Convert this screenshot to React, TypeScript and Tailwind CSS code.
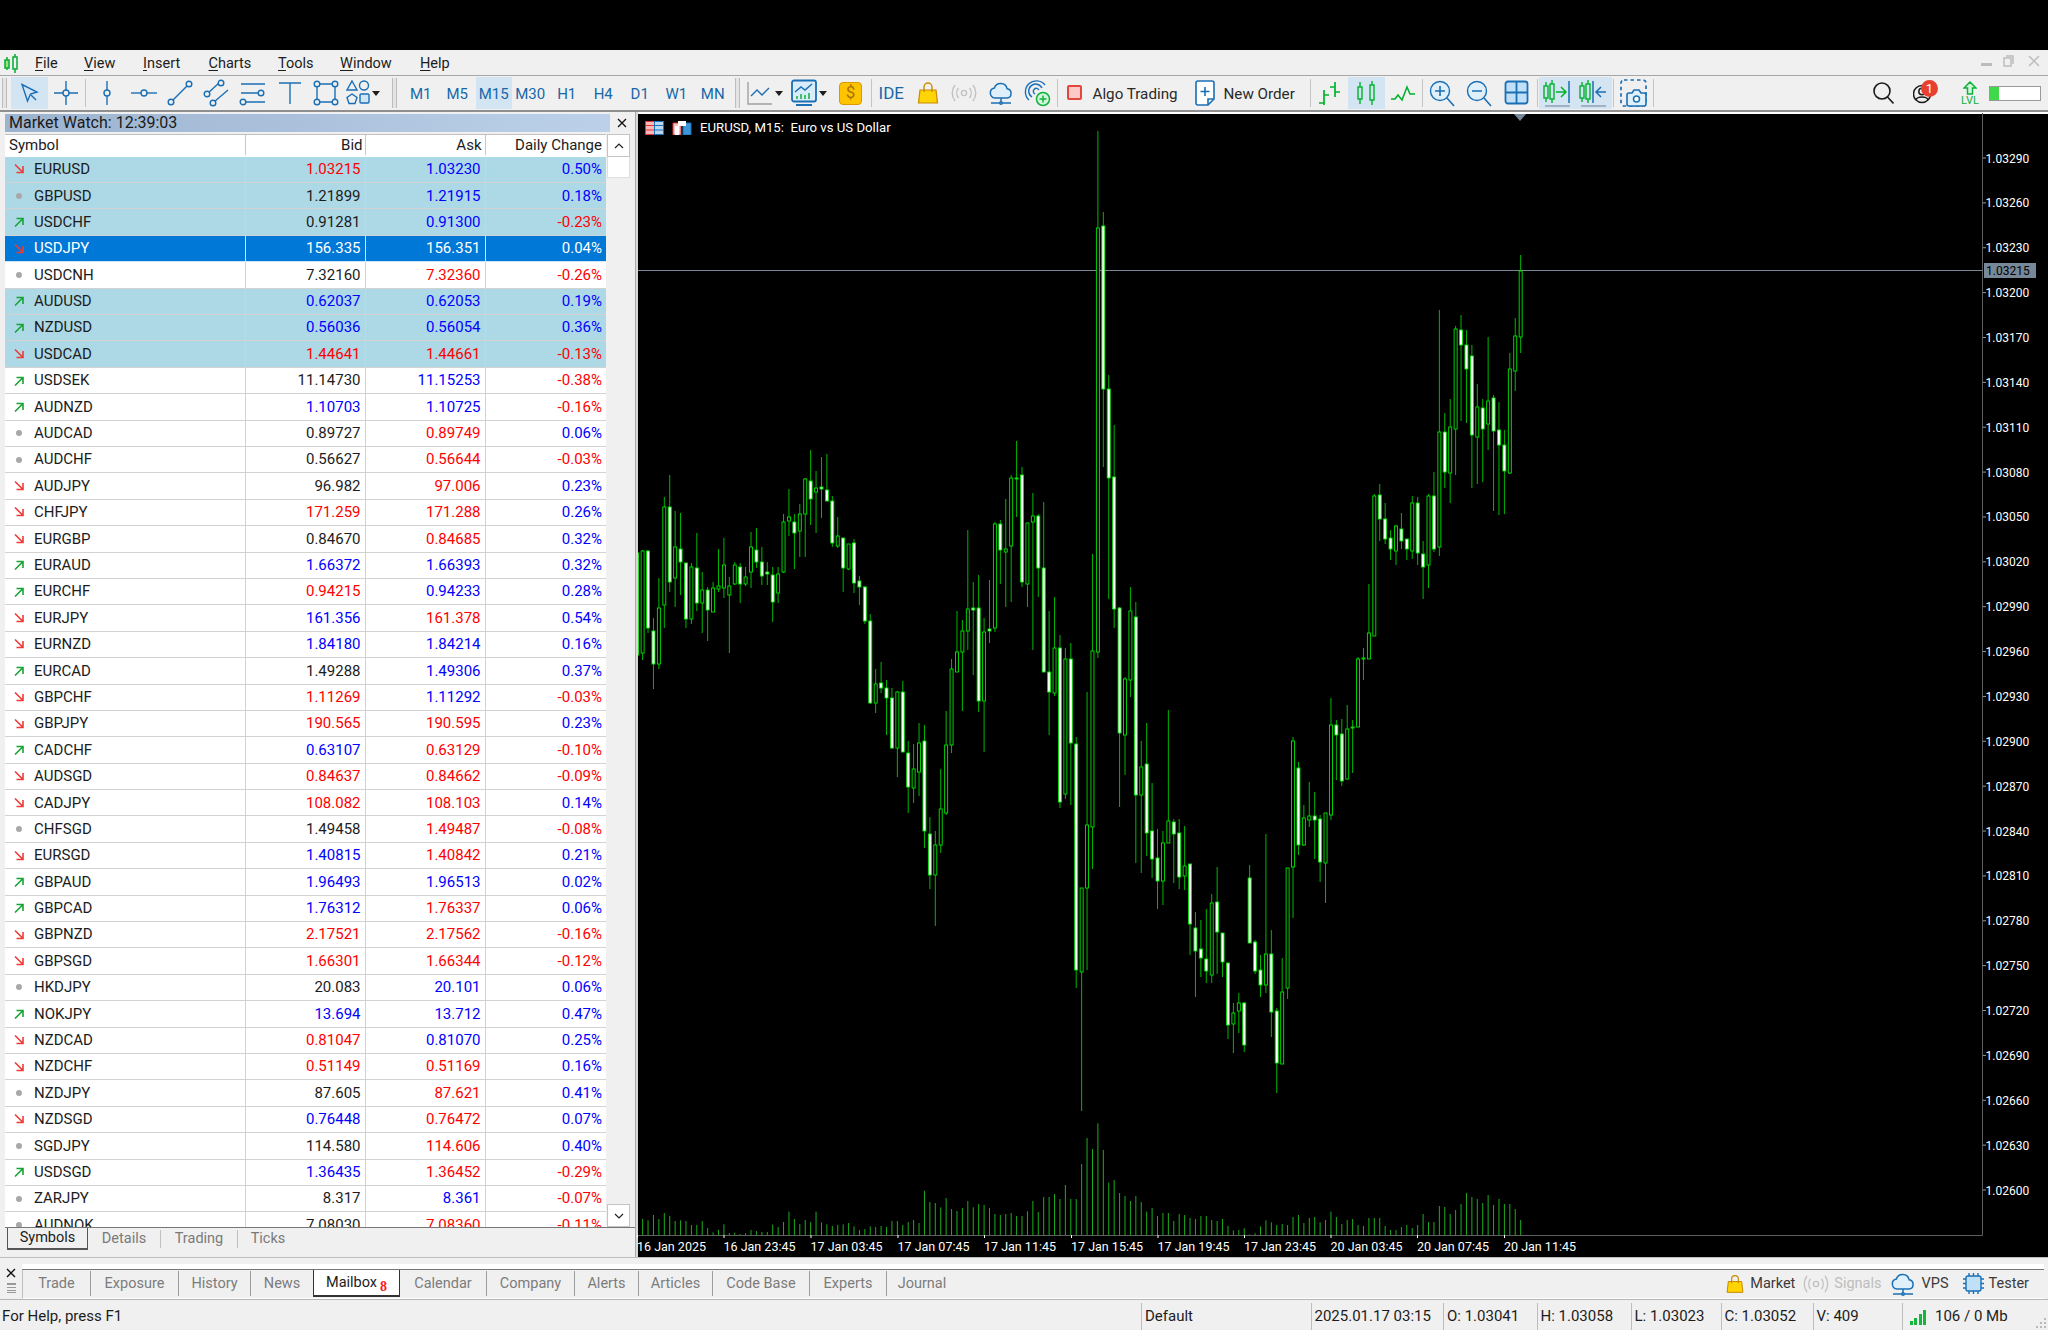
import type { ReactNode } from 'react';

const BLUE = '#1a6fb5';
const GREEN = '#00b32c';

// kind, high, body top, body bottom, low (page y). kind 1 = white body, 0 = hollow
const CANDLES: number[][] = [
  [1,553,553,655,655],[0,550,551,653,660],[1,550,551,628,633],[1,618,631,664,689],[0,578,608,664,669],
  [0,497,507,605,628],[1,475,507,582,592],[0,511,547,578,607],[1,513,549,562,595],[1,563,563,619,628],
  [0,563,567,619,624],[1,533,568,603,611],[0,572,590,603,633],[1,587,590,610,641],[0,582,588,612,612],
  [0,549,586,589,592],[0,538,565,588,598],[0,577,586,595,653],[0,562,565,584,585],[1,563,567,584,603],
  [0,567,577,584,586],[0,532,547,572,588],[1,528,550,562,568],[1,547,562,576,585],[1,562,572,574,585],
  [1,567,575,602,622],[0,567,574,593,603],[0,514,522,572,573],[0,489,517,521,536],[1,514,522,533,569],
  [0,504,514,531,557],[0,478,479,514,557],[1,450,481,499,525],[0,471,488,492,533],[1,457,487,489,518],
  [1,454,490,501,501],[1,496,501,543,547],[0,517,536,546,548],[1,538,538,568,592],[0,544,544,569,570],
  [1,539,543,583,593],[1,576,581,587,605],[1,586,587,621,624],[1,614,621,703,704],[0,669,684,703,713],
  [1,662,683,688,693],[1,680,688,698,735],[1,688,698,748,749],[0,691,692,748,777],[1,681,692,752,752],
  [1,741,753,787,813],[0,744,769,788,803],[0,723,743,772,796],[1,725,741,831,848],[1,817,834,875,889],
  [0,831,845,875,926],[0,769,809,845,853],[0,711,745,813,815],[0,659,669,745,753],[0,611,652,672,672],
  [0,620,631,652,711],[0,530,609,631,650],[1,582,608,610,675],[1,575,608,701,712],[0,618,632,701,752],
  [1,580,629,631,643],[0,522,524,628,632],[1,520,524,550,584],[0,499,549,552,607],[0,475,478,546,602],
  [1,441,478,479,517],[1,467,475,582,587],[0,523,523,584,607],[0,493,516,522,650],[1,514,516,568,597],
  [1,502,568,672,672],[1,611,672,692,735],[0,597,648,693,696],[1,635,648,802,808],[0,648,659,794,799],
  [1,643,659,743,805],[1,737,744,970,988],[0,888,888,972,1111],[0,692,825,888,970],[0,554,651,827,869],
  [0,131,228,652,658],[1,212,226,389,467],[1,375,389,478,599],[1,425,477,609,628],[1,607,608,733,807],
  [0,677,679,735,775],[0,587,611,680,697],[1,602,617,795,863],[0,741,767,795,873],[1,723,764,833,856],
  [1,783,831,859,878],[1,829,858,881,909],[0,831,843,881,905],[0,710,821,843,843],[1,819,822,834,883],
  [1,819,833,877,889],[0,826,866,876,890],[1,864,864,924,955],[1,912,928,951,997],[1,920,949,958,977],
  [1,909,959,971,983],[0,894,903,975,983],[1,867,902,932,974],[1,933,933,962,977],[1,963,963,1025,1039],
  [0,1003,1013,1024,1053],[0,993,1003,1011,1033],[1,1002,1003,1045,1052],[1,865,878,943,943],[1,940,942,971,974],
  [1,955,970,985,997],[0,834,954,985,993],[1,930,954,1012,1037],[1,1008,1011,1063,1093],[0,958,992,1064,1064],
  [0,868,868,988,999],[0,737,741,867,918],[1,762,768,845,855],[0,805,818,845,846],[0,782,816,820,827],
  [1,792,816,820,859],[1,815,819,862,882],[0,813,813,863,903],[0,698,725,815,820],[1,720,725,735,780],
  [1,719,734,781,786],[0,705,729,779,780],[0,720,727,727,773],[0,657,659,727,727],[0,648,658,659,680],
  [0,584,633,659,659],[0,494,496,636,636],[1,484,495,519,541],[1,503,519,539,544],[1,530,538,549,560],
  [0,525,526,551,565],[1,513,529,541,549],[1,539,539,549,560],[0,496,503,551,559],[1,497,503,553,565],
  [1,541,554,567,599],[0,494,496,565,588],[1,472,496,549,552],[0,310,432,547,556],[1,413,432,472,488],
  [0,399,427,473,503],[0,326,329,429,475],[1,315,330,345,421],[1,330,345,369,423],[1,345,356,435,488],
  [0,384,407,437,484],[1,399,408,429,482],[0,337,401,424,450],[1,395,398,431,511],[1,402,430,445,515],
  [1,430,445,471,514],[0,353,369,473,474],[0,318,336,371,391],[0,255,271,337,353],
];

// tops of the volume bars, read off a 3x crop; baseline is 374 in the same scale
const VOLUMES = [
  327,331,315,327,309,318,333,331,333,345,345,333,354,367,360,343,369,368,372,369,
  360,363,366,366,344,351,336,305,327,342,330,336,305,337,343,348,345,343,339,349,
  360,357,349,351,348,351,333,333,345,336,330,339,242,276,279,292,264,297,303,294,
  273,292,282,285,294,312,315,312,309,318,318,304,273,306,261,261,252,267,225,267,
  267,162,84,117,40,120,218,210,249,258,273,258,276,305,294,318,309,309,333,312,
  315,324,327,318,318,330,333,327,348,361,360,355,373,370,349,331,337,345,342,345,
  321,315,339,324,321,337,330,305,321,342,330,327,345,348,324,324,324,348,360,360,
  351,345,354,345,312,336,336,288,291,312,300,282,249,261,267,279,255,285,267,282,
  282,297,330,
];

const PRICES = ['1.03290','1.03260','1.03230','1.03200','1.03170','1.03140','1.03110','1.03080','1.03050','1.03020','1.02990','1.02960','1.02930','1.02900','1.02870','1.02840','1.02810','1.02780','1.02750','1.02720','1.02690','1.02660','1.02630','1.02600'];
const TIMES: [number, string][] = [
  [637, '16 Jan 2025'],[723.5, '16 Jan 23:45'],[810.5, '17 Jan 03:45'],[897.5, '17 Jan 07:45'],[984, '17 Jan 11:45'],[1071, '17 Jan 15:45'],
  [1157.5, '17 Jan 19:45'],[1244, '17 Jan 23:45'],[1330.5, '20 Jan 03:45'],[1417, '20 Jan 07:45'],[1504, '20 Jan 11:45'],
];

// dir: d = red arrow, u = green arrow, n = grey dot. colours: k black, r red, b blue
const ROWS: [string, string, string, string, string, string, string, string][] = [
  ['EURUSD','d','1.03215','r','1.03230','b','0.50%','b'],['GBPUSD','n','1.21899','k','1.21915','b','0.18%','b'],
  ['USDCHF','u','0.91281','k','0.91300','b','-0.23%','r'],['USDJPY','d','156.335','w','156.351','w','0.04%','w'],
  ['USDCNH','n','7.32160','k','7.32360','r','-0.26%','r'],['AUDUSD','u','0.62037','b','0.62053','b','0.19%','b'],
  ['NZDUSD','u','0.56036','b','0.56054','b','0.36%','b'],['USDCAD','d','1.44641','r','1.44661','r','-0.13%','r'],
  ['USDSEK','u','11.14730','k','11.15253','b','-0.38%','r'],['AUDNZD','u','1.10703','b','1.10725','b','-0.16%','r'],
  ['AUDCAD','n','0.89727','k','0.89749','r','0.06%','b'],['AUDCHF','n','0.56627','k','0.56644','r','-0.03%','r'],
  ['AUDJPY','d','96.982','k','97.006','r','0.23%','b'],['CHFJPY','d','171.259','r','171.288','r','0.26%','b'],
  ['EURGBP','d','0.84670','k','0.84685','r','0.32%','b'],['EURAUD','u','1.66372','b','1.66393','b','0.32%','b'],
  ['EURCHF','u','0.94215','r','0.94233','b','0.28%','b'],['EURJPY','d','161.356','b','161.378','r','0.54%','b'],
  ['EURNZD','d','1.84180','b','1.84214','b','0.16%','b'],['EURCAD','u','1.49288','k','1.49306','b','0.37%','b'],
  ['GBPCHF','d','1.11269','r','1.11292','b','-0.03%','r'],['GBPJPY','d','190.565','r','190.595','r','0.23%','b'],
  ['CADCHF','u','0.63107','b','0.63129','r','-0.10%','r'],['AUDSGD','d','0.84637','r','0.84662','r','-0.09%','r'],
  ['CADJPY','d','108.082','r','108.103','r','0.14%','b'],['CHFSGD','n','1.49458','k','1.49487','r','-0.08%','r'],
  ['EURSGD','d','1.40815','b','1.40842','r','0.21%','b'],['GBPAUD','u','1.96493','b','1.96513','b','0.02%','b'],
  ['GBPCAD','u','1.76312','b','1.76337','r','0.06%','b'],['GBPNZD','d','2.17521','r','2.17562','r','-0.16%','r'],
  ['GBPSGD','d','1.66301','r','1.66344','r','-0.12%','r'],['HKDJPY','n','20.083','k','20.101','b','0.06%','b'],
  ['NOKJPY','u','13.694','b','13.712','b','0.47%','b'],['NZDCAD','d','0.81047','r','0.81070','b','0.25%','b'],
  ['NZDCHF','d','0.51149','r','0.51169','r','0.16%','b'],['NZDJPY','n','87.605','k','87.621','r','0.41%','b'],
  ['NZDSGD','d','0.76448','b','0.76472','r','0.07%','b'],['SGDJPY','n','114.580','k','114.606','r','0.40%','b'],
  ['USDSGD','u','1.36435','b','1.36452','r','-0.29%','r'],['ZARJPY','n','8.317','k','8.361','b','-0.07%','r'],
  ['AUDNOK','n','7.08030','k','7.08360','r','-0.11%','r'],
];

const TEXT_COLORS: Record<string, string> = {
  k: 'text-[#1c1c1c]',
  r: 'text-[#ff0000]',
  b: 'text-[#0000ff]',
  w: 'text-white',
};

const TICKED = [0, 1, 2, 5, 6, 7];

function Ico({ children, w = 28, h = 28, stroke = BLUE }: { children: ReactNode; w?: number; h?: number; stroke?: string }) {
  return (
    <svg width={w} height={h} viewBox={`0 0 ${w} ${h}`} fill="none" stroke={stroke} strokeWidth="1.4">
      {children}
    </svg>
  );
}

function Tool({ active, children }: { active?: boolean; children: ReactNode }) {
  return (
    <div className={`w-[36.5px] h-[32px] shrink-0 flex items-center justify-center ${active ? 'bg-[#d3e4f3]' : ''}`}>
      {children}
    </div>
  );
}

function Period({ label, active }: { label: string; active?: boolean }) {
  return (
    <div className={`w-[36.5px] h-[32px] shrink-0 flex items-center justify-center pt-[2px] text-[15px] text-[#1668a8] ${active ? 'bg-[#d3e4f3]' : ''}`}>
      {label}
    </div>
  );
}

function Sep() {
  return <div className="w-px h-[28px] shrink-0 mx-[1px] bg-[#c4c4c4]" />;
}

function Grip() {
  return <div className="w-[5px] h-[30px] shrink-0 border-x border-[#bdbdbd] bg-[#e4e4e4]" />;
}

function Caret() {
  return <div className="w-0 h-0 border-x-[4px] border-x-transparent border-t-[5px] border-t-[#1e1e1e]" />;
}

function CandleGlyph({ x, top, bottom, hi, lo }: { x: number; top: number; bottom: number; hi: number; lo: number }) {
  return (
    <g>
      <path d={`M${x} ${hi}V${top}M${x} ${bottom}V${lo}`} />
      <rect x={x - 2} y={top} width="4" height={bottom - top} />
    </g>
  );
}

function BagIcon({ size = 24 }: { size?: number }) {
  return (
    <svg width={size} height={size} viewBox="0 0 24 24">
      <path d="M4 9h16l1.5 13h-19z" fill="#ffd400" stroke="#c98a00" strokeWidth="1.2" />
      <path d="M8 11V6a4 4 0 0 1 8 0v5" fill="none" stroke="#c98a00" strokeWidth="1.4" />
    </svg>
  );
}

function SignalIcon() {
  return (
    <svg width="26" height="22" viewBox="0 0 26 22" fill="none" stroke="#c2c2c2" strokeWidth="1.4">
      <circle cx="13" cy="11" r="2.6" />
      <path d="M7.5 6a8 8 0 0 0 0 10M18.5 6a8 8 0 0 1 0 10M4 3a13 13 0 0 0 0 16M22 3a13 13 0 0 1 0 16" />
    </svg>
  );
}

function CloudIcon() {
  return (
    <svg width="26" height="26" viewBox="0 0 26 26" fill="#dff0fb" stroke={BLUE} strokeWidth="1.5">
      <path d="M7 18a5 5 0 0 1-.6-9.9 6.6 6.6 0 0 1 12.7.6A4.7 4.7 0 0 1 19 18z" />
      <path d="M13 18v5M3 23h20" fill="none" />
      <circle cx="13" cy="23" r="1.2" />
    </svg>
  );
}

function Candles() {
  const xAt = (i: number) => 637.2 + 5.42 * i;
  return (
    <svg className="block absolute inset-0" width="1412" height="1145" viewBox="636 112 1412 1145">
      <rect x="636" y="112" width="1412" height="2" fill="#fff" />
      <path d="M1982.5 113V1235.5H638" stroke="#5f5f5f" fill="none" />
      <path d="M1514 114h12l-6 7z" fill="#78889a" />

      {VOLUMES.map((t, i) => (
        <path key={i} d={`M${xAt(i + 1)} ${1110 + t / 3}V1235`} stroke="#20c020" strokeWidth="0.9" />
      ))}

      <line x1="638" x2="1982" y1="270.5" y2="270.5" stroke="#778899" />

      {CANDLES.map(([kind, hi, top, bottom, lo], i) => {
        const x = xAt(i);
        return (
          <g key={i}>
            <line x1={x} x2={x} y1={hi} y2={lo} stroke="#00cc00" strokeWidth="0.9" />
            <rect x={x - 1.5} y={top} width="3" height={Math.max(bottom - top, 1)} fill={kind ? '#fff' : '#000'} stroke="#00e600" strokeWidth="0.9" />
          </g>
        );
      })}

      <rect x="636" y="112" width="2" height="1145" fill="#d8d8d8" />

      {PRICES.map((p, i) => {
        const y = 158 + i * 44.87;
        return (
          <g key={p}>
            <path d={`M1983 ${y}h3`} stroke="#9a9a9a" />
            <text x="1985.5" y={y + 4.5} fill="#fff" fontSize="12">{p}</text>
          </g>
        );
      })}
      <rect x="1984" y="263" width="52" height="15" fill="#778899" />
      <text x="1986" y="275" fill="#000" fontSize="12">1.03215</text>

      {TIMES.map(([x, t]) => (
        <g key={t}>
          <path d={`M${x + 0.5} 1235v3`} stroke="#fff" />
          <text x={x} y="1250.5" fill="#fff" fontSize="12.5">{t}</text>
        </g>
      ))}
    </svg>
  );
}

function ChartHeader() {
  return (
    <div className="absolute left-[9px] top-[8px] flex items-center gap-[8px] text-white text-[13.2px] leading-4">
      <svg width="19" height="14" viewBox="0 0 19 14">
        <rect width="19" height="14" rx="1" fill="#fff" />
        <rect x="0.5" y="0.5" width="9" height="13" fill="#f9b9b9" stroke="#d33" />
        <rect x="9.5" y="0.5" width="9" height="13" fill="#b9d7f2" stroke="#1a6fb5" />
        <path d="M1 4.5h8M1 9h8" stroke="#d33" />
        <path d="M10 4.5h8M10 9h8" stroke="#1a6fb5" />
      </svg>
      <svg width="20" height="14" viewBox="0 0 20 14">
        <path d="M1 2h8v12H1z" fill="#f8c0c0" stroke="#d33" />
        <path d="M11 2h8v12h-8z" fill="#3d95da" stroke="#1a6fb5" />
        <rect x="6" y="0" width="8" height="5" fill="#fff" />
        <rect x="3" y="5" width="4" height="9" fill="#fff" />
      </svg>
      <span className="whitespace-pre">EURUSD, M15:  Euro vs US Dollar</span>
    </div>
  );
}

function DirIcon({ dir }: { dir: string }) {
  if (dir === 'n') return <div className="w-[6px] h-[6px] rounded-full bg-[#a8a8a8] ml-[3px] mr-[3px]" />;
  const up = dir === 'u';
  return (
    <svg width="12" height="12" viewBox="0 0 12 12" fill="none" stroke={up ? '#16a534' : '#ee3b36'} strokeWidth="1.6">
      {up ? <path d="M2 10.5 10 2.5M3.5 2.5H10V9" /> : <path d="M2 1.5 10 9.5M3.5 9.5H10V3" />}
    </svg>
  );
}

function MarketRow({ row, index }: { row: (typeof ROWS)[number]; index: number }) {
  const [symbol, dir, bid, bidC, ask, askC, chg, chgC] = row;
  const selected = index === 3;
  const bg = selected ? 'bg-[#0078d7]' : TICKED.includes(index) ? 'bg-[#add8e6]' : 'bg-white';
  const line = selected ? 'border-[#cfe4f5]' : 'border-[#d2d2d2]';
  return (
    <div className={`flex h-[26.4px] shrink-0 border-b ${line} ${bg}`}>
      <div className={`w-[240.5px] shrink-0 flex items-center border-r ${line}`}>
        <div className="w-[29px] pl-[8px] shrink-0 flex items-center"><DirIcon dir={dir} /></div>
        <span className={selected ? 'text-white' : 'text-[#1c1c1c]'}>{symbol}</span>
      </div>
      <div className={`w-[120px] shrink-0 flex items-center justify-end pr-[4px] border-r ${line} ${TEXT_COLORS[bidC]}`}>{bid}</div>
      <div className={`w-[120px] shrink-0 flex items-center justify-end pr-[4px] border-r ${line} ${TEXT_COLORS[askC]}`}>{ask}</div>
      <div className={`flex-1 flex items-center justify-end pr-[4px] ${TEXT_COLORS[chgC]}`}>{chg}</div>
    </div>
  );
}

function MarketWatch() {
  return (
    <div className="w-[636px] shrink-0 h-full flex flex-col bg-[#f0f0f0] border-r border-[#a9a9a9] pl-[5px] text-[15px]">
      <div className="flex items-center mt-[2px] h-[18px] shrink-0">
        <div className="w-[605px] h-full bg-gradient-to-r from-[#9cb3cf] to-[#bcd1e9] flex items-center text-[16px] text-[#1a1a1a] pl-[4px]">
          Market Watch: 12:39:03
        </div>
        <svg className="ml-[7px]" width="10" height="10" viewBox="0 0 10 10" stroke="#111" strokeWidth="1.3"><path d="M1 1l8 8M9 1 1 9" /></svg>
      </div>
      <div className="flex mt-[2px] h-[1094px] shrink-0 overflow-hidden border-b border-[#777]">
        <div className="w-[601px] shrink-0 flex flex-col overflow-hidden">
          <div className="flex h-[22.7px] shrink-0 pb-[2px] bg-white border-t border-[#c0c0c0] text-[#1c1c1c]">
            <div className="w-[240.5px] shrink-0 flex items-center pl-[4px] border-r border-[#c8c8c8]">Symbol</div>
            <div className="w-[120px] shrink-0 flex items-center justify-end pr-[2px] border-r border-[#c8c8c8]">Bid</div>
            <div className="w-[120px] shrink-0 flex items-center justify-end pr-[3px] border-r border-[#c8c8c8]">Ask</div>
            <div className="flex-1 flex items-center justify-end pr-[4px]">Daily Change</div>
          </div>
          {ROWS.map((r, i) => <MarketRow key={r[0]} row={r} index={i} />)}
        </div>
        <div className="w-[23px] shrink-0 flex flex-col ml-[1px]">
          <div className="h-[23px] shrink-0 bg-white border border-[#c4c4c4] flex items-center justify-center">
            <svg width="10" height="6" viewBox="0 0 10 6" fill="none" stroke="#222" strokeWidth="1.2"><path d="M1 5l4-4 4 4" /></svg>
          </div>
          <div className="h-[21px] shrink-0 bg-white border border-t-0 border-[#dedede]" />
          <div className="flex-1" />
          <div className="h-[23px] shrink-0 bg-white border border-[#c4c4c4] flex items-center justify-center">
            <svg width="10" height="6" viewBox="0 0 10 6" fill="none" stroke="#222" strokeWidth="1.2"><path d="M1 1l4 4 4-4" /></svg>
          </div>
        </div>
      </div>
      <div className="flex h-[22px] shrink-0 text-[#7a7a7a] text-[14.5px]">
        <div className="ml-[2px] w-[81px] bg-[#f0f0f0] border-b-2 border-r border-l border-[#555] flex items-center justify-center text-[#1c1c1c] rounded-bl-[1px]">Symbols</div>
        <div className="w-[73px] flex items-center justify-center border-r border-[#c0c0c0] my-[2px]">Details</div>
        <div className="w-[77px] flex items-center justify-center border-r border-[#c0c0c0] my-[2px]">Trading</div>
        <div className="w-[60px] flex items-center justify-center my-[2px]">Ticks</div>
      </div>
    </div>
  );
}

const TABS_LEFT = [
  ['Trade', 'w-[68px]'],
  ['Exposure', 'w-[88px]'],
  ['History', 'w-[72px]'],
  ['News', 'w-[62px]'],
];
const TABS_RIGHT = [
  ['Calendar', 'w-[87px]'],
  ['Company', 'w-[88px]'],
  ['Alerts', 'w-[64px]'],
  ['Articles', 'w-[74px]'],
  ['Code Base', 'w-[97px]'],
  ['Experts', 'w-[77px]'],
  ['Journal', 'w-[70px]'],
];

function BottomTabs() {
  return (
    <div className="h-[43px] shrink-0 flex bg-[#f0f0f0] border-t border-[#bdbdbd] border-b border-b-[#b5b5b5] text-[14.5px] text-[#7c7c7c]">
      <div className="w-[22px] shrink-0 flex flex-col items-center pt-[10px] gap-[5px]">
        <svg width="10" height="10" viewBox="0 0 10 10" stroke="#111" strokeWidth="1.4"><path d="M1 1l8 8M9 1 1 9" /></svg>
        <div className="w-[9px] h-[10px] border-y border-[#999] bg-[repeating-linear-gradient(#999_0_1px,transparent_1px_3px)]" />
      </div>
      <div className="flex-1 flex flex-col pr-[4px] pt-[6px]">
        <div className="h-[6px] shrink-0 bg-white border-b border-[#767676]" />
        <div className="flex-1 flex items-stretch h-[23px] bg-[#f0f0f0] border-l border-[#bfbfbf] border-b border-b-white pb-[1px]">
          {TABS_LEFT.map(([t, w], i) => (
            <div key={t} className={`${w} shrink-0 flex items-center justify-center my-[1px] ${i < 3 ? 'border-r border-[#9c9c9c]' : ''}`}>{t}</div>
          ))}
          <div className="w-[87px] shrink-0 bg-white border-x border-b-2 border-[#333] flex items-center justify-center text-[#1c1c1c]">
            Mailbox
            <span className="ml-[3px] mt-[7px] text-[#ff1a1a] text-[14px] font-bold font-['Liberation_Serif',serif]">8</span>
          </div>
          {TABS_RIGHT.map(([t, w], i) => (
            <div key={t} className={`${w} shrink-0 flex items-center justify-center my-[1px] ${i < 6 ? 'border-r border-[#9c9c9c]' : ''}`}>{t}</div>
          ))}
          <div className="flex-1" />
          <div className="flex items-center gap-[5px] text-[#3a3a3a] mr-[8px]"><BagIcon size={20} />Market</div>
          <div className="flex items-center gap-[5px] text-[#bdbdbd] mr-[8px]"><SignalIcon />Signals</div>
          <div className="flex items-center gap-[6px] text-[#3a3a3a] mr-[14px]"><CloudIcon />VPS</div>
          <div className="flex items-center gap-[5px] text-[#3a3a3a] mr-[15px]">
            <svg width="21" height="21" viewBox="0 0 21 21" fill="#bfe0f6" stroke={BLUE} strokeWidth="1.4">
              <rect x="3" y="3" width="15" height="15" rx="2" />
              <path d="M6 0v3M10.500 0v3M15 0v3M6 18v3M10.500 18v3M15 18v3M0 6h3M0 10.500h3M0 15h3M18 6h3M18 10.500h3M18 15h3" />
            </svg>
            Tester
          </div>
        </div>
      </div>
    </div>
  );
}

function StatusCell({ className, children }: { className: string; children: ReactNode }) {
  return <div className={`${className} shrink-0 h-full flex items-center pl-[3px] border-l border-[#bdbdbd]`}>{children}</div>;
}

function StatusBar() {
  return (
    <div className="h-[30px] shrink-0 flex items-center bg-[#f0f0f0] text-[15px] text-[#1c1c1c] pl-[2px] pt-[3px] relative">
      <div className="w-[1139px] shrink-0">For Help, press F1</div>
      <StatusCell className="w-[169.500px]">Default</StatusCell>
      <StatusCell className="w-[132.500px]">2025.01.17 03:15</StatusCell>
      <StatusCell className="w-[93.500px]">O: 1.03041</StatusCell>
      <StatusCell className="w-[94px]">H: 1.03058</StatusCell>
      <StatusCell className="w-[90px]">L: 1.03023</StatusCell>
      <StatusCell className="w-[92px]">C: 1.03052</StatusCell>
      <StatusCell className="w-[89px]">V: 409</StatusCell>
      <StatusCell className="flex-1">
        <div className="flex items-end gap-[1.500px] h-[16px] ml-[4px] mr-[9px]">
          <div className="w-[3px] h-[4px] bg-[#16b53c]" />
          <div className="w-[3px] h-[7px] bg-[#16b53c]" />
          <div className="w-[3px] h-[11px] bg-[#16b53c]" />
          <div className="w-[3px] h-[15px] bg-[#16b53c]" />
        </div>
        106 / 0 Mb
      </StatusCell>
      <svg className="absolute right-[1px] bottom-[1px]" width="12" height="12" viewBox="0 0 12 12" fill="#b8b8b8">
        <rect x="9" y="9" width="2" height="2" /><rect x="5" y="9" width="2" height="2" /><rect x="1" y="9" width="2" height="2" />
        <rect x="9" y="5" width="2" height="2" /><rect x="5" y="5" width="2" height="2" /><rect x="9" y="1" width="2" height="2" />
      </svg>
    </div>
  );
}

function MenuBar() {
  const items = [
    ['F', 'ile', 'w-[49px]'],
    ['V', 'iew', 'w-[59px]'],
    ['I', 'nsert', 'w-[65.500px]'],
    ['C', 'harts', 'w-[69.500px]'],
    ['T', 'ools', 'w-[62px]'],
    ['W', 'indow', 'w-[80px]'],
    ['H', 'elp', 'w-[50px]'],
  ];
  return (
    <div className="h-[26px] shrink-0 flex items-center bg-[#f0f0f0] border-b border-[#a6a6a6] text-[14.5px] text-[#1c1c1c] relative pt-[2px]">
      <div className="w-[35px] shrink-0 pl-[3px] flex items-center">
        <svg width="17" height="19" viewBox="0 0 17 19" fill="none" stroke="#12b03c" strokeWidth="1.6">
          <path d="M4 3v3M4 14v2M12 0v3M12 15v4" />
          <rect x="2" y="6" width="4" height="8" fill="#9ce07a" />
          <rect x="10" y="3" width="4" height="12" />
        </svg>
      </div>
      {items.map(([a, b, w]) => (
        <div key={a} className={`${w} shrink-0`}><span className="underline underline-offset-2 decoration-1">{a}</span>{b}</div>
      ))}
      <div className="absolute right-[8px] top-[5px] flex items-center">
        <div className="w-[11px] h-[3px] bg-[#bcbcbc] mt-[6px]" />
        <svg className="ml-[11px]" width="11" height="12" viewBox="0 0 11 12" fill="none" stroke="#bcbcbc" strokeWidth="1.5"><rect x="1" y="3" width="7" height="8" /><path d="M3 1h7v8" /></svg>
        <svg className="ml-[14px]" width="12" height="12" viewBox="0 0 12 12" stroke="#bcbcbc" strokeWidth="1.5"><path d="M1 1l10 10M11 1 1 11" /></svg>
      </div>
    </div>
  );
}

function Toolbar() {
  return (
    <div className="h-[36px] shrink-0 flex items-center bg-[#f0f0f0] border-b-2 border-[#8f8f8f] pl-[2px] text-[15.2px] text-[#2a2a2a]">
      <Grip />
      <div className="w-[4px] shrink-0" />
      <Tool active>
        <Ico><path d="M7 5.500 22 13l-6.500 2-3 7z" /><path d="m16 16 5 5" /></Ico>
      </Tool>
      <Tool><Ico><path d="M14 2v24M2 14h24" /><circle cx="14" cy="14" r="3" fill="#f0f0f0" /></Ico></Tool>
      <Sep />
      <div className="w-[2px] shrink-0" />
      <Tool><Ico><path d="M14 2v24" /><circle cx="14" cy="14" r="3" fill="#f0f0f0" /></Ico></Tool>
      <Tool><Ico><path d="M1 14h26" /><circle cx="14" cy="14" r="3" fill="#f0f0f0" /></Ico></Tool>
      <Tool><Ico><path d="M6 22 22 6" /><circle cx="5" cy="23" r="2.800" fill="#f0f0f0" /><circle cx="23" cy="5" r="2.800" fill="#f0f0f0" /></Ico></Tool>
      <Tool><Ico><path d="M5 14 16 4M11 23 25 11" /><circle cx="4" cy="15" r="2.800" fill="#f0f0f0" /><circle cx="18" cy="4" r="2.800" fill="#f0f0f0" /><circle cx="10" cy="24" r="2.800" fill="#f0f0f0" /></Ico></Tool>
      <Tool><Ico><path d="M2 5h24M2 14h17M7 23h19" /><circle cx="22" cy="14" r="2.800" fill="#f0f0f0" /><circle cx="4" cy="23" r="2.800" fill="#f0f0f0" /></Ico></Tool>
      <Tool><Ico><path d="M3 4h22M14 4v21" /></Ico></Tool>
      <Tool><Ico><path d="M5 5h18v18H5z" /><circle cx="5" cy="5" r="2.800" fill="#f0f0f0" /><circle cx="23" cy="5" r="2.800" fill="#f0f0f0" /><circle cx="5" cy="23" r="2.800" fill="#f0f0f0" /><circle cx="23" cy="23" r="2.800" fill="#f0f0f0" /></Ico></Tool>
      <div className="w-[42px] shrink-0 flex items-center gap-[1px]">
        <Ico w={26} h={28}><path d="M7 2 12 11H2z" /><circle cx="19" cy="6.500" r="4.500" /><path d="m7 15 5 3.500-2 6H4l-2-6z" /><rect x="15" y="15" width="9" height="9" rx="1" fill="#cfe6f7" /></Ico>
        <Caret />
      </div>
      <div className="w-[5px] shrink-0" />
      <Grip />
      <div className="w-[6px] shrink-0" />
      <Period label="M1" />
      <Period label="M5" />
      <Period label="M15" active />
      <Period label="M30" />
      <Period label="H1" />
      <Period label="H4" />
      <Period label="D1" />
      <Period label="W1" />
      <Period label="MN" />
      <div className="w-[4px] shrink-0" />
      <Grip />
      <div className="w-[3px] shrink-0" />
      <div className="w-[40px] shrink-0 flex items-center gap-[1px] justify-end">
        <Ico w={28} h={28}>
          <path d="M2 3v22h24" stroke="#a0a0a0" />
          <path d="m5 17 6-6 5 5 7-7" />
        </Ico>
        <Caret />
      </div>
      <div className="w-[44px] shrink-0 flex items-center gap-[1px] justify-end">
        <svg width="28" height="28" viewBox="0 0 28 28" fill="none" strokeWidth="1.500">
          <rect x="2" y="1.500" width="24" height="21" rx="2" fill="#d9ecf9" stroke={BLUE} strokeWidth="1.800" />
          <path d="M6 26h16" stroke={BLUE} strokeWidth="2" />
          <path d="m5 13 6-5 4 3 7-6" stroke={BLUE} />
          <path d="M7 20v-3M11 20v-5M15 20v-4M19 20v-6" stroke="#11b03c" />
        </svg>
        <Caret />
      </div>
      <div className="ml-[4px] w-[39px] shrink-0 flex justify-center">
        <div className="w-[23px] h-[23px] rounded-[4px] bg-[#ffc400] border border-[#d99a00] text-[#a86f00] text-[17px] flex items-center justify-center">$</div>
      </div>
      <Sep />
      <div className="w-[36.500px] shrink-0 text-center text-[17px] text-[#1668a8] leading-none">IDE</div>
      <Tool><BagIcon /></Tool>
      <Tool><SignalIcon /></Tool>
      <Tool><CloudIcon /></Tool>
      <Tool>
        <svg width="28" height="28" viewBox="0 0 28 28" fill="none" stroke={BLUE} strokeWidth="1.400">
          <path d="M6 21A11 11 0 1 1 22 6" />
          <path d="M9 18a7 7 0 1 1 10-9" />
          <path d="M12 15a3 3 0 1 1 4-4" />
          <circle cx="20" cy="20" r="6.500" fill="#d3f5dc" stroke="#0eb23c" strokeWidth="1.500" />
          <path d="M20 16.500v7M16.500 20h7" stroke="#0eb23c" strokeWidth="1.500" />
        </svg>
      </Tool>
      <Sep />
      <div className="w-[126px] shrink-0 flex items-center pl-[8px] gap-[11px]">
        <div className="w-[15px] h-[15px] rounded-[2px] border-2 border-[#e4453e] bg-[#fbc9c6]" />
        <span className="pt-[2px]">Algo Trading</span>
      </div>
      <div className="w-[120px] shrink-0 flex items-center pl-[10px] gap-[9px]">
        <svg width="20" height="26" viewBox="0 0 20 26" fill="none" stroke={BLUE} strokeWidth="1.600">
          <path d="M3 1h14a2 2 0 0 1 2 2v16l-6 6H3a2 2 0 0 1-2-2V3a2 2 0 0 1 2-2z" fill="#fff" />
          <path d="M10 7v9M5.500 11.500h9M13 25v-6h6" />
        </svg>
        <span className="pt-[2px] whitespace-nowrap">New Order</span>
      </div>
      <div className="w-[4px] shrink-0" />
      <Sep />
      <Tool>
        <Ico stroke={GREEN}><path d="M8 11v15M3 24h5M8 16h5M19 3v15M14 8h5M19 13h5" strokeWidth="1.700" /></Ico>
      </Tool>
      <Tool active>
        <Ico stroke={GREEN}><CandleGlyph x={8} top={8} bottom={20} hi={3} lo={25} /><CandleGlyph x={20} top={6} bottom={21} hi={2} lo={26} /></Ico>
      </Tool>
      <Tool><Ico stroke={GREEN}><path d="M2 20h4l3-4 4 5 5-13 3 7h5" strokeWidth="1.600" /></Ico></Tool>
      <Sep />
      <Tool><Ico><circle cx="12" cy="12" r="9.500" fill="#dff0fb" /><path d="M12 7v10M7 12h10M19 19l7 8" strokeWidth="1.600" /></Ico></Tool>
      <Tool><Ico><circle cx="12" cy="12" r="9.500" fill="#dff0fb" /><path d="M7 12h10M19 19l7 8" strokeWidth="1.600" /></Ico></Tool>
      <div className="w-[2px] shrink-0" />
      <Tool>
        <Ico><rect x="2.500" y="2.500" width="22" height="22" rx="2.500" fill="#bfe0f8" strokeWidth="1.800" /><path d="M13.500 2.500v22M2.500 13.500h22" strokeWidth="1.800" /></Ico>
      </Tool>
      <Sep />
      <Tool active>
        <svg width="28" height="28" viewBox="0 0 28 28" fill="none">
          <g stroke={GREEN} strokeWidth="1.400"><CandleGlyph x={3} top={7} bottom={19} hi={3} lo={23} /><CandleGlyph x={9} top={5} bottom={20} hi={1} lo={24} /></g>
          <path d="M13 13h9M18 8l5 5-5 5" stroke={GREEN} strokeWidth="1.500" />
          <path d="M26 2v22" stroke={BLUE} strokeWidth="1.500" />
          <path d="M2 27h25" stroke="#8fa3b6" strokeWidth="1.500" />
        </svg>
      </Tool>
      <Tool active>
        <svg width="28" height="28" viewBox="0 0 28 28" fill="none">
          <g stroke={GREEN} strokeWidth="1.400"><CandleGlyph x={3} top={7} bottom={19} hi={3} lo={23} /><CandleGlyph x={9} top={5} bottom={20} hi={1} lo={24} /></g>
          <path d="M14 2v22" stroke={BLUE} strokeWidth="1.500" />
          <path d="M27 13h-9M22 8l-5 5 5 5" stroke={BLUE} strokeWidth="1.500" />
          <path d="M2 27h25" stroke="#8fa3b6" strokeWidth="1.500" />
        </svg>
      </Tool>
      <Sep />
      <div className="w-[1px] shrink-0" />
      <Tool>
        <Ico>
          <rect x="1" y="1" width="25" height="26" rx="3" strokeDasharray="3.500 3" strokeWidth="1.700" />
          <path d="M9 14h3l2-3h5l2 3h3a2 2 0 0 1 2 2v9a2 2 0 0 1-2 2H9a2 2 0 0 1-2-2v-9a2 2 0 0 1 2-2z" fill="#dff0fb" strokeWidth="1.600" />
          <circle cx="16.500" cy="20" r="3" fill="#fff" strokeWidth="1.500" />
        </Ico>
      </Tool>
      <Sep />
      <div className="flex-1" />
      <svg width="22" height="24" viewBox="0 0 22 24" fill="none" stroke="#1c1c1c" strokeWidth="1.600"><circle cx="10" cy="10" r="8" /><path d="m15.500 16 6 6.500" /></svg>
      <div className="relative w-[26px] h-[24px] ml-[17px]">
        <svg width="20" height="24" viewBox="0 0 20 24" fill="none" stroke="#1c1c1c" strokeWidth="1.500" className="absolute left-[2px] top-[1px]">
          <circle cx="9" cy="12" r="8.500" />
          <circle cx="9" cy="9.500" r="3.200" />
          <path d="M3 18c1-4 11-4 12 0" />
        </svg>
        <div className="absolute left-[10px] -top-[1px] w-[17px] h-[17px] rounded-full bg-[#e8402f] text-white text-[13px] leading-[17px] text-center">1</div>
      </div>
      <div className="ml-[23px] w-[20px] flex flex-col items-center text-[#0eb23c] text-[11px] leading-[11px]">
        <svg width="14" height="14" viewBox="0 0 14 14" fill="#d3f5dc" stroke="#0eb23c" strokeWidth="1.500"><path d="M7 1 13 7H9.500v6h-5V7H1z" /></svg>
        LVL
      </div>
      <div className="ml-[9px] mr-[7px] w-[52px] h-[15px] bg-white border border-[#9a9a9a] flex">
        <div className="w-[9px] h-full bg-[#3fd94b]" />
      </div>
    </div>
  );
}

export default function App() {
  return (
    <div className="w-[2048px] h-[1330px] flex flex-col overflow-hidden font-[Roboto,sans-serif] bg-[#f0f0f0]">
      <div className="h-[50px] shrink-0 bg-black" />
      <MenuBar />
      <Toolbar />
      <div className="h-[1145px] shrink-0 flex">
        <MarketWatch />
        <div className="relative flex-1 bg-black overflow-hidden">
          <Candles />
          <ChartHeader />
        </div>
      </div>
      <BottomTabs />
      <StatusBar />
    </div>
  );
}
